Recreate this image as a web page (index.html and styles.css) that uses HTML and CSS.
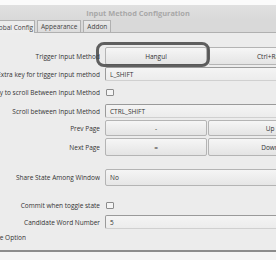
FILE: index.html
```html
<!DOCTYPE html>
<html>
  <head>
    <meta charset="UTF-8" />
    <title>Input Method Configuration</title>
    <link rel="stylesheet" href="styles.css">
  </head>
  <body>
    <div class="window">
      <div class="top-strip"></div>
      <div class="titlebar"><span class="title">Input Method Configuration</span></div>
      <div class="tabs">
        <div class="tab active"><span>Global Config</span></div>
        <div class="tab">Appearance</div>
        <div class="tab">Addon</div>
      </div>

      <div class="panel">
        <div class="row row-trigger">
          <div class="label"><span>Trigger Input Method</span></div>
          <div class="keys">
            <div class="key">Hangul</div>
            <div class="key key-wide">Ctrl+Ralt</div>
          </div>
          <div class="mark"></div>
        </div>
        <div class="row">
          <div class="label"><span>Extra key for trigger input method</span></div>
          <div class="field">L_SHIFT</div>
        </div>
        <div class="row">
          <div class="label"><span>Use extra key to scroll Between Input Method</span></div>
          <div><div class="check"></div></div>
        </div>
        <div class="row row-scroll">
          <div class="label"><span>Scroll between Input Method</span></div>
          <div class="field">CTRL_SHIFT</div>
        </div>
        <div class="row row-small">
          <div class="label"><span>Prev Page</span></div>
          <div class="keys">
            <div class="key">-</div>
            <div class="key key-wide">Up</div>
          </div>
        </div>
        <div class="row row-next">
          <div class="label"><span>Next Page</span></div>
          <div class="keys">
            <div class="key">=</div>
            <div class="key key-wide">Down</div>
          </div>
        </div>
        <div class="row row-share">
          <div class="label"><span>Share State Among Window</span></div>
          <div class="field combo">No</div>
        </div>
        <div class="row row-commit">
          <div class="label"><span>Commit when toggle state</span></div>
          <div><div class="check"></div></div>
        </div>
        <div class="row row-small">
          <div class="label"><span>Candidate Word Number</span></div>
          <div class="field">5</div>
        </div>
        <div class="advance"><span>Show Advance Option</span></div>
      </div>

      <div class="footer"></div>
    </div>
  </body>
</html>
```

FILE: styles.css
```css
* {
  box-sizing: border-box;
}
body {
  margin: 0;
  width: 276px;
  height: 260px;
  overflow: hidden;
  background-color: #ececec;
  font-family: 'Open Sans', sans-serif;
  font-size: 6.5px;
  color: #333333;
}
.window {
  width: 276px;
}
.top-strip {
  height: 5px;
  background-color: #fbfbfb;
}
.titlebar {
  height: 15px;
  display: flex;
  align-items: center;
  justify-content: center;
  background: linear-gradient(#e0e0e0, #d9d9d9);
}
.title {
  font-weight: bold;
  font-size: 7.4px;
  color: #a8a8a8;
}
.tabs {
  display: flex;
  align-items: flex-end;
  height: 13px;
  background-color: #d9d9d9;
  border-bottom: 1px solid #b0b0b0;
}
.tab {
  height: 12px;
  margin-right: 2px;
  padding: 0 3px;
  display: flex;
  align-items: center;
  background: linear-gradient(#e9e9e9, #dcdcdc);
  border: 1px solid #b0b0b0;
  border-bottom: none;
  color: #444;
}
.tab.active {
  width: 35px;
  height: 13px;
  margin-bottom: -1px;
  padding-right: 1px;
  justify-content: flex-end;
  overflow: hidden;
  white-space: nowrap;
  border-left: none;
  background: #ededed;
}
.panel {
  padding-top: 14px;
}
.row {
  position: relative;
  display: grid;
  grid-template-columns: 100px 1fr;
  column-gap: 5px;
  align-items: center;
  height: 18px;
}
.row-scroll {
  margin-top: 1px;
}
.row-small {
  height: 16px;
}
.row-next {
  margin-top: 2px;
}
.row-share {
  margin-top: 12px;
}
.row-commit {
  margin-top: 10px;
}
.label {
  display: flex;
  justify-content: flex-end;
  overflow: hidden;
  white-space: nowrap;
}
.keys {
  display: flex;
  gap: 1px;
  height: 100%;
}
.key {
  width: 102px;
  flex-shrink: 0;
  display: flex;
  align-items: center;
  justify-content: center;
  background: linear-gradient(#f6f6f6, #e4e4e4);
  border: 1px solid #b4b4b4;
  border-radius: 2px;
}
.key-wide {
  width: 124px;
}
.field {
  width: 200px;
  height: 14px;
  display: flex;
  align-items: center;
  padding-left: 4px;
  background: linear-gradient(#f4f4f4, #ececec);
  border: 1px solid #9a9a9a;
  border-bottom-color: #d0d0d0;
  border-radius: 2px;
  color: #333;
}
.combo {
  height: 17px;
  background: linear-gradient(#f5f5f5, #e6e6e6);
  border: 1px solid #b4b4b4;
}
.check {
  width: 8px;
  height: 7px;
  background-color: #f4f4f4;
  border: 1px solid #8c8c8c;
  border-radius: 1px;
  margin-left: 1px;
}
.mark {
  position: absolute;
  left: 96px;
  top: -5px;
  width: 114px;
  height: 25px;
  border: 3px solid rgba(70, 70, 70, 0.85);
  border-radius: 8px;
  filter: blur(0.6px);
}
.advance {
  width: 26px;
  height: 14px;
  display: flex;
  align-items: center;
  justify-content: flex-end;
  overflow: hidden;
  white-space: nowrap;
}
.footer {
  margin-top: 6px;
  height: 10px;
  border-top: 2px solid #8c8c8c;
  background-color: #f4f4f4;
}
```
